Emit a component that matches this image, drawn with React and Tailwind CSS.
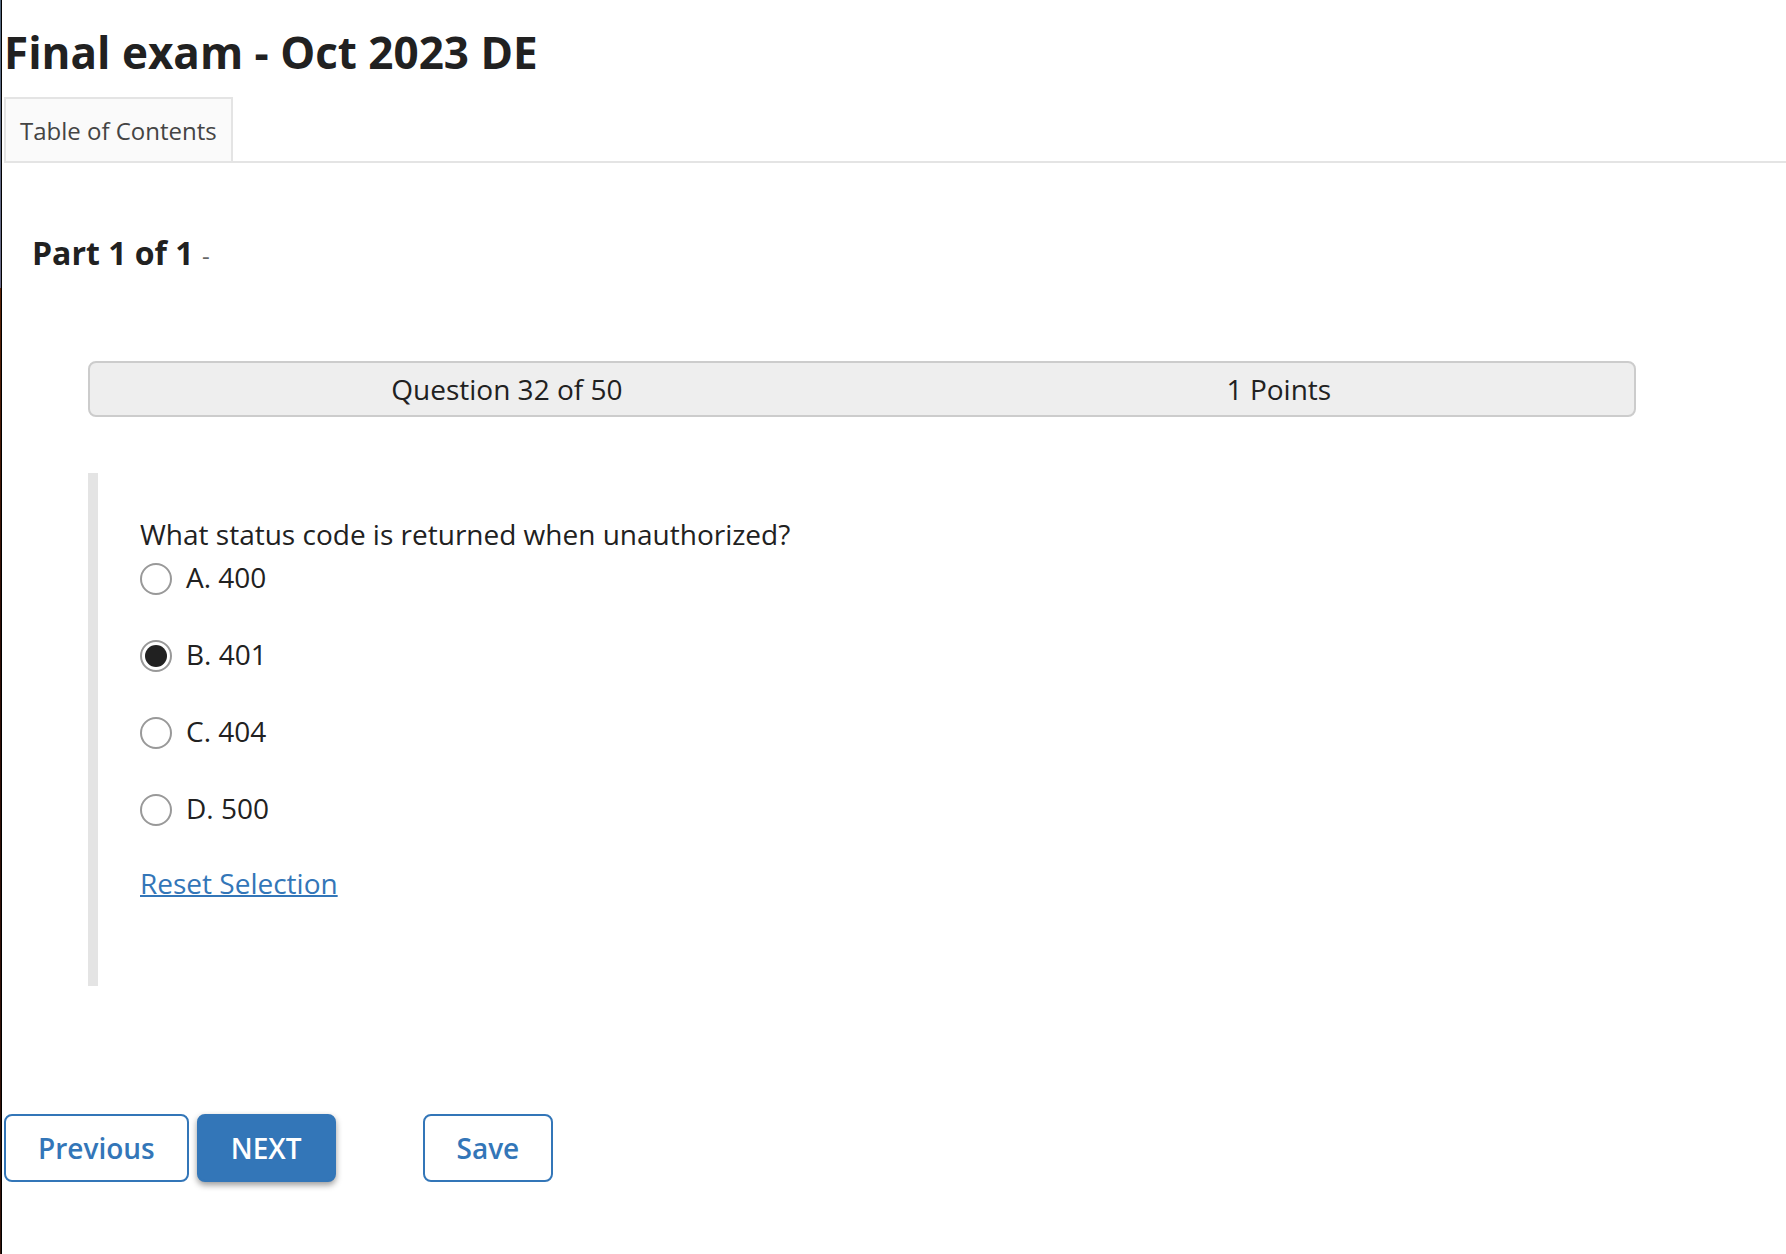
import { useState } from "react";

const options = [
  { id: "a", text: "A. 400" },
  { id: "b", text: "B. 401" },
  { id: "c", text: "C. 404" },
  { id: "d", text: "D. 500" },
];

function Choice({ id, text, checked, onChange }) {
  return (
    <label className="flex w-fit items-center gap-[14px]">
      <input
        type="radio"
        name="answer"
        value={id}
        checked={checked}
        onChange={onChange}
        className="mt-1 size-8 shrink-0 appearance-none rounded-full border-2 border-[#999999] bg-white p-[3px] checked:bg-[#212121] checked:bg-clip-content"
      />
      <span>{text}</span>
    </label>
  );
}

export default function App() {
  const [answer, setAnswer] = useState("b");
  const outline =
    "rounded-lg border-2 border-[#3376b8] bg-white px-8 py-3 font-semibold text-[#3376b8]";

  return (
    <div className="flex min-h-screen bg-white font-['Open_Sans','Noto_Sans',sans-serif] text-[28px] leading-10 text-[#212121]">
      <div
        aria-hidden="true"
        className="w-[2px] shrink-0 border-r border-black bg-[linear-gradient(#54687f,#6a6a88_23%,#5c2408_23%,#2e0c04_50%,#35140a)]"
      />
      <div className="min-w-0 grow">
        <h1 className="pt-[22px] pl-[2px] text-[44px] leading-[60px] font-bold">
          Final exam - Oct 2023 DE
        </h1>
        <nav className="mt-[15px] ml-[2px] flex border-b-2 border-[#e4e4e4]">
          <button
            type="button"
            className="border-2 border-b-0 border-[#e4e4e4] bg-[#fafafa] px-[14px] pt-[14px] pb-3 text-[24px] leading-9 text-[#444444]"
          >
            Table of Contents
          </button>
        </nav>
        <main>
          <h2 className="mt-[66px] ml-[30px] text-[32px] leading-[48px] font-bold">
            Part 1 of 1 <small className="text-[24px] leading-none font-normal text-[#666666]">-</small>
          </h2>
          <div className="mt-[84px] mr-[150px] ml-[86px]">
            <div className="flex rounded-lg border-2 border-[#cccccc] bg-[#eeeeee] py-[6px] text-center">
              <div className="w-[54%]">Question 32 of 50</div>
              <div className="w-[46%]">1 Points</div>
            </div>
            <fieldset
              aria-labelledby="question"
              className="mt-14 border-l-[10px] border-[#e4e4e4] pt-[41px] pb-[83px] pl-[42px]"
            >
              <p id="question">What status code is returned when unauthorized?</p>
              <div className="mt-[3px] flex flex-col gap-[37px]">
                {options.map((o) => (
                  <Choice
                    key={o.id}
                    {...o}
                    checked={answer === o.id}
                    onChange={() => setAnswer(o.id)}
                  />
                ))}
              </div>
              <a
                href="#reset"
                onClick={() => setAnswer("")}
                className="mt-[35px] block w-fit text-[#3376b8] underline decoration-2"
              >
                Reset Selection
              </a>
            </fieldset>
          </div>
          <div className="mt-32 ml-[2px] flex items-center">
            <button type="button" className={outline}>
              Previous
            </button>
            <button
              type="button"
              className="mr-[87px] ml-2 rounded-lg border-2 border-[#3376b8] bg-[#3376b8] px-8 py-3 font-semibold text-white shadow-[0_3px_6px_rgba(0,0,0,0.4)]"
            >
              NEXT
            </button>
            <button type="button" className={outline}>
              Save
            </button>
          </div>
        </main>
      </div>
    </div>
  );
}
